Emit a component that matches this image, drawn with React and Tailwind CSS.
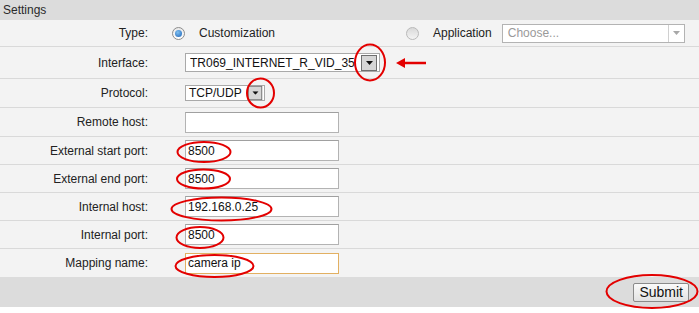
import React from "react";

const font = { fontFamily: '"Liberation Sans", Arial, sans-serif' };

function Radio({ checked }) {
  return checked ? (
    <span className="grid h-[13px] w-[13px] place-items-center rounded-full border border-[#8c8c8c] bg-gradient-to-b from-[#e9e9e9] to-[#ffffff]">
      <span className="h-[7px] w-[7px] rounded-full bg-[radial-gradient(circle_at_40%_35%,#7fc0f0,#1d63b8)]" />
    </span>
  ) : (
    <span className="h-[13px] w-[13px] rounded-full border border-[#b9b9b9] bg-gradient-to-b from-[#d9d9d9] to-[#f4f4f4]" />
  );
}

function DropButton() {
  return (
    <span className="grid h-[16px] w-[16px] shrink-0 place-items-center border border-[#6f6f6f] bg-[#d6d6d6]">
      <svg width="7" height="4" viewBox="0 0 7 4">
        <path d="M0 0h7L3.5 4z" fill="#111" />
      </svg>
    </span>
  );
}

function Row({ label, h, last, children }) {
  return (
    <div className={`flex items-center ${last ? "" : "border-b border-[#d9d9d9]"} ${h}`}>
      <div className="w-[148px] shrink-0 text-right text-[12px] text-[#222]">{label}</div>
      {children}
    </div>
  );
}

function TextInput({ value, orange }) {
  return (
    <div
      className={`ml-[37px] flex h-[21px] w-[154px] items-center border bg-white px-[2px] text-[12px] text-[#111] ${
        orange ? "border-[#e2b062]" : "border-[#b3b3b3] border-t-[#a0a0a0]"
      }`}
    >
      {value}
    </div>
  );
}

export default function App() {
  return (
    <div className="relative h-[313px] w-[699px] overflow-hidden bg-white" style={font}>
      {/* Header */}
      <div className="flex h-[20px] items-center bg-[#dcdcdc] px-[3px] text-[12px] text-[#2a2a2a]">Settings</div>

      <div className="bg-[#f3f3f3]">
        <Row label="Type:" h="h-[27px]">
          <div className="ml-[24px] flex w-[234px] items-center">
            <Radio checked />
            <span className="ml-[14px] text-[12px] text-[#222]">Customization</span>
          </div>
          <div className="flex items-center">
            <Radio />
            <span className="ml-[14px] text-[12px] text-[#222]">Application</span>
            <div className="ml-[10px] flex h-[19px] w-[183px] items-center justify-between border border-[#b3b3b3] bg-white pl-[5px] text-[12px] text-[#9a9a9a]">
              Choose...
              <span className="grid h-full w-[16px] place-items-center border-l border-[#d0d0d0]">
                <svg width="7" height="4" viewBox="0 0 7 4">
                  <path d="M0 0h7L3.5 4z" fill="#a8a8a8" />
                </svg>
              </span>
            </div>
          </div>
        </Row>

        <Row label="Interface:" h="h-[32px]">
          <div className="ml-[37px] flex h-[19px] w-[195px] items-center border border-[#a9a9a9] bg-white pl-[4px] pr-[1px] text-[12px] text-[#111]">
            <span className="w-[171px] overflow-hidden whitespace-nowrap">TR069_INTERNET_R_VID_35</span>
            <DropButton />
          </div>
        </Row>

        <Row label="Protocol:" h="h-[29px]">
          <div className="ml-[37px] flex h-[16px] w-[80px] items-center justify-between border border-[#a9a9a9] bg-white pl-[3px] pr-[1px] text-[12px] text-[#111]">
            TCP/UDP
            <span className="scale-90"><DropButton /></span>
          </div>
        </Row>

        <Row label="Remote host:" h="h-[29px]">
          <TextInput value="" />
        </Row>
        <Row label="External start port:" h="h-[28px]">
          <TextInput value="8500" />
        </Row>
        <Row label="External end port:" h="h-[28px]">
          <TextInput value="8500" />
        </Row>
        <Row label="Internal host:" h="h-[28px]">
          <TextInput value="192.168.0.25" />
        </Row>
        <Row label="Internal port:" h="h-[28px]">
          <TextInput value="8500" />
        </Row>
        <Row label="Mapping name:" h="h-[28px]" last>
          <TextInput value="camera ip" orange />
        </Row>
      </div>

      {/* Footer */}
      <div className="flex h-[30px] items-center justify-end bg-[#dcdcdc] pr-[10px]">
        <button className="h-[19px] rounded-[2px] border border-[#8a8a8a] bg-gradient-to-b from-[#fafafa] to-[#e2e2e2] px-[5px] text-[14px] leading-none text-[#111]">
          Submit
        </button>
      </div>

      {/* Red annotations */}
      <svg className="pointer-events-none absolute inset-0" width="699" height="313" viewBox="0 0 699 313" fill="none" stroke="#e30000" strokeWidth="2">
        <ellipse cx="370" cy="62.5" rx="15" ry="18" />
        <path d="M402 63h24" strokeWidth="2.5" />
        <path d="M396 63l9-5v10z" fill="#e30000" stroke="none" />
        <ellipse cx="260.5" cy="93" rx="13.5" ry="14.5" />
        <ellipse cx="204" cy="152" rx="26.5" ry="10" />
        <ellipse cx="203.5" cy="179" rx="26.5" ry="9.5" />
        <ellipse cx="221.5" cy="209" rx="50" ry="11.5" />
        <ellipse cx="200" cy="237.5" rx="23.5" ry="10.5" />
        <ellipse cx="214.5" cy="266" rx="39" ry="11" />
        <ellipse cx="652" cy="291.5" rx="45.5" ry="16.5" />
      </svg>
    </div>
  );
}
